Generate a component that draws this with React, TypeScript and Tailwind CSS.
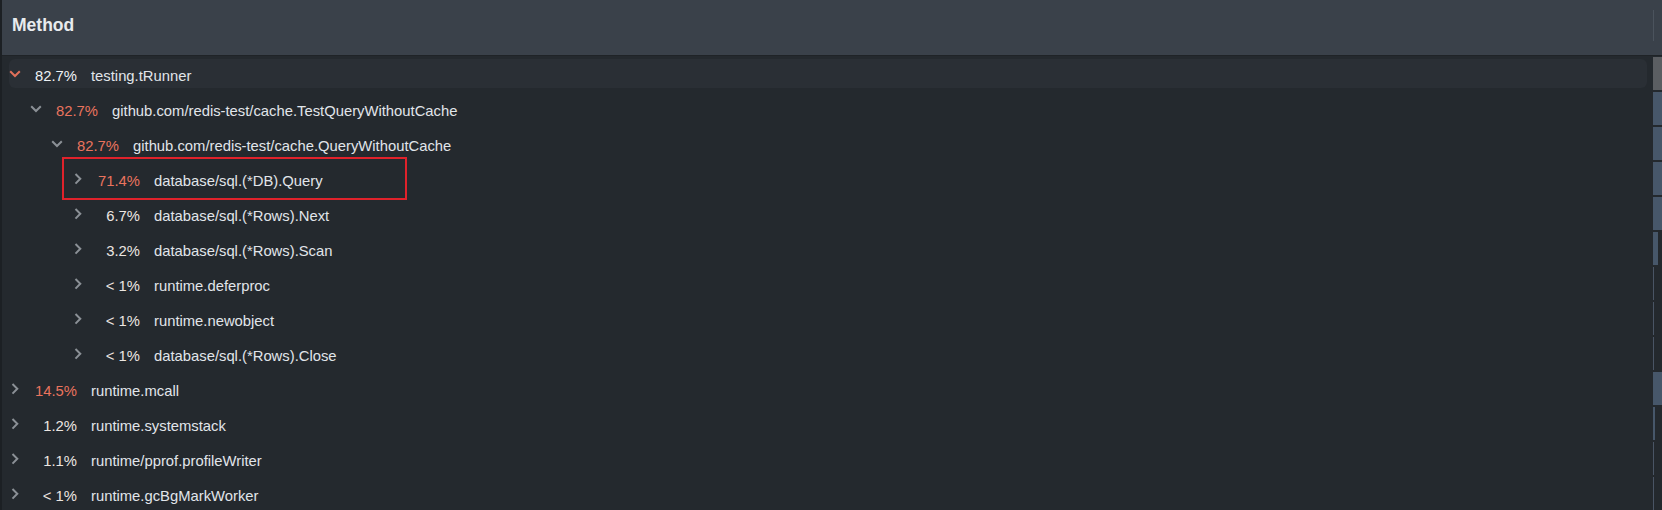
import React from "react";

type Row = { level: number; pct: string; name: string; open: boolean; hot: boolean; hover?: boolean; bar: number | "full"; barColor?: string };

const rows: Row[] = [
  { level: 0, pct: "82.7%", name: "testing.tRunner", open: true, hot: false, hover: true, bar: "full", barColor: "#5b5e62" },
  { level: 1, pct: "82.7%", name: "github.com/redis-test/cache.TestQueryWithoutCache", open: true, hot: true, bar: "full" },
  { level: 2, pct: "82.7%", name: "github.com/redis-test/cache.QueryWithoutCache", open: true, hot: true, bar: "full" },
  { level: 3, pct: "71.4%", name: "database/sql.(*DB).Query", open: false, hot: true, bar: "full" },
  { level: 3, pct: "6.7%", name: "database/sql.(*Rows).Next", open: false, hot: false, bar: "full" },
  { level: 3, pct: "3.2%", name: "database/sql.(*Rows).Scan", open: false, hot: false, bar: 5 },
  { level: 3, pct: "< 1%", name: "runtime.deferproc", open: false, hot: false, bar: 1 },
  { level: 3, pct: "< 1%", name: "runtime.newobject", open: false, hot: false, bar: 1 },
  { level: 3, pct: "< 1%", name: "database/sql.(*Rows).Close", open: false, hot: false, bar: 1 },
  { level: 0, pct: "14.5%", name: "runtime.mcall", open: false, hot: true, bar: "full" },
  { level: 0, pct: "1.2%", name: "runtime.systemstack", open: false, hot: false, bar: 2 },
  { level: 0, pct: "1.1%", name: "runtime/pprof.profileWriter", open: false, hot: false, bar: 1 },
  { level: 0, pct: "< 1%", name: "runtime.gcBgMarkWorker", open: false, hot: false, bar: 1 },
];

function Chevron({ open, red }: { open: boolean; red: boolean }) {
  const c = red ? "#e0705a" : "#8b9096";
  if (open) {
    return (
      <svg width="12" height="8" viewBox="0 0 12 8" className="block">
        <polyline points="1.2,1.2 6,6 10.8,1.2" fill="none" stroke={c} strokeWidth="2" />
      </svg>
    );
  }
  return (
    <svg width="8" height="12" viewBox="0 0 8 12" className="block">
      <polyline points="1.5,1 6.3,5.8 1.5,10.6" fill="none" stroke={c} strokeWidth="2" />
    </svg>
  );
}

export default function App() {
  return (
    <div
      className="flex h-[510px] w-[1662px] overflow-hidden bg-[#24292e]"
      style={{ fontFamily: '"Liberation Sans", Arial, sans-serif' }}
    >
      <div className="w-[2px] shrink-0 bg-[#1c2024]" />
      <div className="flex min-w-0 flex-1 flex-col">
        <div className="flex h-[56px] shrink-0 items-start justify-between border-b border-[#1f2327] bg-[#3a414a] pl-[10px]">
          <div className="pt-[15px] text-[17.5px] font-bold leading-[20px] text-[#e8ebee]">Method</div>
          <div className="mr-[8px] mt-[10px] h-[31px] w-px bg-[#4b535d]" />
        </div>
        <div className="flex flex-1">
          <div className="relative flex-1 pl-[7px] pr-[6px]">
            {rows.map((r, i) => (
              <div key={i} className="h-[35px] py-[3px]">
                <div
                  className={
                    "flex h-[29px] items-center rounded-[6px] " + (r.hover ? "bg-[#2a2f35]" : "")
                  }
                  style={{ paddingLeft: r.level * 21 }}
                >
                  <div className="flex w-[12px] shrink-0 justify-center">
                    <Chevron open={r.open} red={!!r.hover} />
                  </div>
                  <div
                    className={
                      "w-[56px] shrink-0 pt-[6px] text-right text-[14.8px] leading-[17px] " +
                      (r.hot ? "text-[#ea745e]" : r.hover ? "text-[#eef2f5]" : "text-[#ece6e1]")
                    }
                  >
                    {r.pct}
                  </div>
                  <div className="ml-[14px] whitespace-nowrap pt-[6px] text-[14.8px] leading-[17px] text-[#e1e5ea]">
                    {r.name}
                  </div>
                </div>
              </div>
            ))}
            <div className="absolute left-[60px] top-[101px] h-[43px] w-[345px] border-2 border-[#e0222b]" />
          </div>
          <div className="w-[9px] shrink-0">
            {rows.map((r, i) => (
              <div key={i} className="h-[35px] py-[1px]">
                <div
                  className="h-[33px]"
                  style={{
                    width: r.bar === "full" ? "100%" : r.bar,
                    backgroundColor: r.barColor ?? (r.bar === 1 ? "#4a5565" : "#47576a"),
                  }}
                />
              </div>
            ))}
          </div>
        </div>
      </div>
    </div>
  );
}
